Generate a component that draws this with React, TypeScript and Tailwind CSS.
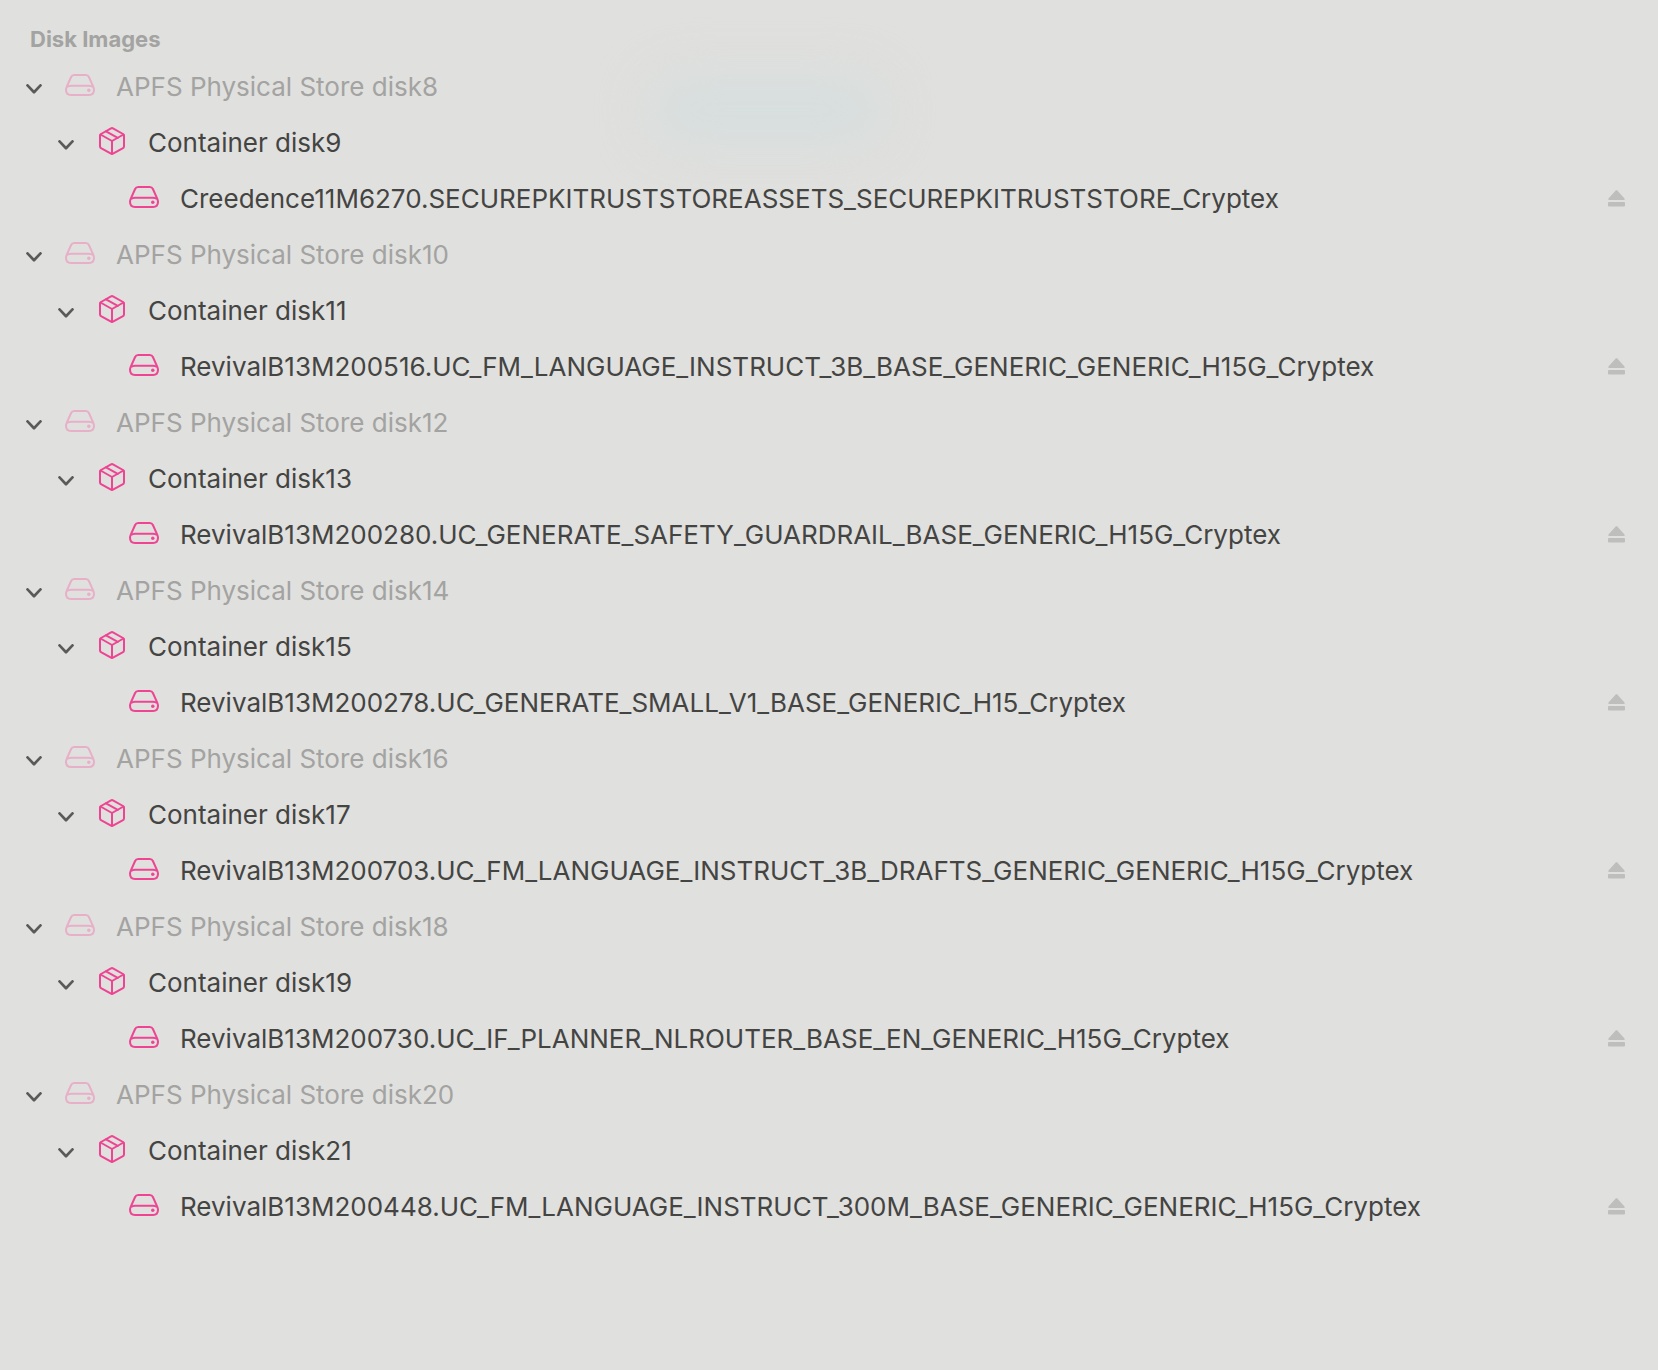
import React from "react";

const stores = [
  { store: "disk8", container: "disk9", volume: "Creedence11M6270.SECUREPKITRUSTSTOREASSETS_SECUREPKITRUSTSTORE_Cryptex" },
  { store: "disk10", container: "disk11", volume: "RevivalB13M200516.UC_FM_LANGUAGE_INSTRUCT_3B_BASE_GENERIC_GENERIC_H15G_Cryptex" },
  { store: "disk12", container: "disk13", volume: "RevivalB13M200280.UC_GENERATE_SAFETY_GUARDRAIL_BASE_GENERIC_H15G_Cryptex" },
  { store: "disk14", container: "disk15", volume: "RevivalB13M200278.UC_GENERATE_SMALL_V1_BASE_GENERIC_H15_Cryptex" },
  { store: "disk16", container: "disk17", volume: "RevivalB13M200703.UC_FM_LANGUAGE_INSTRUCT_3B_DRAFTS_GENERIC_GENERIC_H15G_Cryptex" },
  { store: "disk18", container: "disk19", volume: "RevivalB13M200730.UC_IF_PLANNER_NLROUTER_BASE_EN_GENERIC_H15G_Cryptex" },
  { store: "disk20", container: "disk21", volume: "RevivalB13M200448.UC_FM_LANGUAGE_INSTRUCT_300M_BASE_GENERIC_GENERIC_H15G_Cryptex" },
];

const DriveIcon = () => (
  <svg className="w-[30px] h-[22px]" viewBox="0 0 30 22" fill="none" stroke="currentColor" strokeWidth="2" strokeLinejoin="round">
    <path d="M9.2 1h11.600c1.500 0 2.500.7 3.100 2l4.300 9.600c.5 1.100.8 2 .8 3.200 0 3.200-1.900 5.200-5 5.200H6c-3.100 0-5-2-5-5.200 0-1.200.3-2.100.8-3.200L6.100 3c.6-1.300 1.600-2 3.100-2z" />
    <path d="M2 13c1-.9 2.300-1.300 4-1.300h18c1.700 0 3 .4 4 1.300" />
    <circle cx="23.800" cy="16.300" r="1.700" fill="currentColor" stroke="none" />
  </svg>
);

const BoxIcon = () => (
  <svg className="w-[26px] h-[28px]" viewBox="0 0 26 28" fill="none" stroke="currentColor" strokeWidth="2" strokeLinejoin="round" strokeLinecap="round">
    <path d="M12 1.400L2 7c-.7.400-1 .9-1 1.600v10.800c0 .8.300 1.300 1 1.700l10 5.600c.7.400 1.300.4 2 0l10-5.600c.7-.4 1-.9 1-1.700V8.600c0-.7-.3-1.200-1-1.600L14 1.400c-.7-.4-1.300-.4-2 0z" />
    <path d="M1.500 7.500L13 14l11.500-6.500M13 14v12.800M7 4.300l11.800 6.600" />
  </svg>
);

const Chevron = () => (
  <button type="button" aria-label="Collapse" className="w-4 shrink-0 pt-1.5 text-[#5a5a58]">
    <svg className="w-4 h-[10px]" viewBox="0 0 16 10" fill="none" stroke="currentColor" strokeWidth="2.700" strokeLinecap="round" strokeLinejoin="round">
      <path d="M1.500 1.400L8 8.200l6.500-6.800" />
    </svg>
  </button>
);

const EjectButton = ({ name }: { name: string }) => (
  <button type="button" aria-label={`Eject ${name}`} className="ml-auto shrink-0 text-[#bebebd]">
    <svg className="w-[17px] h-[17px]" viewBox="0 0 17 17" fill="currentColor">
      <path d="M7.700.5c.5-.5 1.100-.5 1.600 0l7 7.700c.7.800.4 1.800-.7 1.800H1.400C.3 10 0 9 .7 8.200z" />
      <rect x="0" y="12" width="17" height="4.500" rx="1" />
    </svg>
  </button>
);

const Icon = ({ children }: { children: React.ReactNode }) => (
  <span className="w-[30px] shrink-0 flex justify-center pb-0.5 ml-[23px] mr-[21px]">{children}</span>
);

const App = () => {
  return (
    <main className="relative min-h-screen bg-[#e0e0de] pt-5 pl-[26px] pr-[33px] font-['Inter','Liberation_Sans',sans-serif] text-[26px] text-[#444442] overflow-hidden">
      {/* desktop colour showing through the sidebar */}
      <div className="absolute left-[39%] top-[74px] w-[240px] h-[72px] rounded-full bg-[#d7dede] blur-xl" />
      <h2 className="relative h-[39px] pl-1 text-[22px] leading-[39px] font-bold text-[#a3a3a1]">Disk Images</h2>
      <ul className="relative">
        {stores.map((item) => (
          <li key={item.store}>
            <div className="h-14 pb-0.5 flex items-center">
              <Chevron />
              <span className="text-[#e7afc8]"><Icon><DriveIcon /></Icon></span>
              <span className="text-[#a3a3a1]">APFS Physical Store {item.store}</span>
            </div>
            <ul className="pl-8">
              <li>
                <div className="h-14 pb-0.5 flex items-center">
                  <Chevron />
                  <span className="text-[#ee4492]"><Icon><BoxIcon /></Icon></span>
                  <span>Container {item.container}</span>
                </div>
                <ul className="pl-12">
                  <li className="h-14 pb-0.5 flex items-center">
                    <span className="text-[#ee4492]"><Icon><DriveIcon /></Icon></span>
                    <span className="whitespace-nowrap">{item.volume}</span>
                    <EjectButton name={item.volume} />
                  </li>
                </ul>
              </li>
            </ul>
          </li>
        ))}
      </ul>
    </main>
  );
};

export default App;
